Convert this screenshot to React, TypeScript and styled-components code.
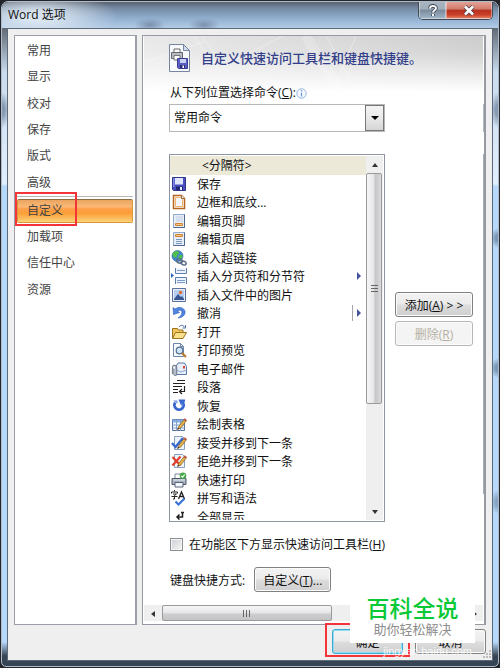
import React from "react";
import styled, { createGlobalStyle, css } from "styled-components";

const GlobalStyle = createGlobalStyle`
  *, *::before, *::after { box-sizing: border-box; }
  body {
    margin: 0;
    background: #23252b;
    color: #111;
    font: 12px/18px "Open Sans", "Noto Sans CJK SC", sans-serif;
  }
  button, select, input { font: inherit; color: inherit; margin: 0; }
  ul { list-style: none; margin: 0; padding: 0; }
`;

/* ---------- window frame ---------- */

const Page = styled.div`
  display: flex;
  min-height: 100vh;
  padding: 1px;
`;

const Window = styled.section`
  flex: 1;
  min-width: 0;
  display: flex;
  flex-direction: column;
  padding: 0 5px 5px;
  border: 1px solid #aebccb;
  border-radius: 7px 7px 5px 5px;
  background:
    radial-gradient(ellipse 8px 18px at 0 108px, #5f7690aa 30%, #5f769000),
    radial-gradient(ellipse 8px 18px at 100% 108px, #5f7690aa 30%, #5f769000),
    radial-gradient(ellipse 8px 10px at 100% 236px, #5f7690aa 30%, #5f769000),
    radial-gradient(ellipse 8px 10px at 100% 366px, #5f7690aa 30%, #5f769000),
    radial-gradient(ellipse 8px 12px at 100% 500px, #5f769088 30%, #5f769000),
    linear-gradient(#36454f00 0, #36454f00 calc(100% - 24px), #364453 calc(100% - 10px)),
    linear-gradient(#dfe9f500 0, #c9dbee 70px, #e2effc 182px, #b6d8fb 184px, #b6d8fb 100%);
`;

const TitleBar = styled.header`
  display: flex;
  justify-content: space-between;
  align-items: flex-start;
  height: 26px;
  margin: 0 -5px;
  padding-left: 6px;
  border-radius: 6px 6px 0 0;
  background:
    radial-gradient(ellipse 80px 24px at 36px 14px, #e6eef6d9 20%, #e6eef600 100%),
    radial-gradient(ellipse 16px 7px at 148px 23px, #53677e88, #53677e00),
    radial-gradient(ellipse 16px 7px at 202px 23px, #53677e88, #53677e00),
    linear-gradient(#596270 0, #7388a0 6px, #8ba7c6 14px, #a1bddd 21px, #b3cbe4 100%);
`;

const Title = styled.h1`
  margin: 4px 0 0;
  font-size: 12px;
  line-height: 18px;
  font-weight: 400;
`;

const Captions = styled.div`
  display: flex;
  height: 18px;
  margin-right: 5px;
  border: 1px solid #3e4a58;
  border-top: 0;
  border-radius: 0 0 5px 5px;
  overflow: hidden;
`;

const CaptionButton = styled.button<{ $close?: boolean }>`
  display: grid;
  place-items: center;
  width: ${(p) => (p.$close ? 46 : 27)}px;
  padding: 0;
  border: 1px solid #ffffff66;
  border-top: 0;
  background: ${(p) =>
    p.$close
      ? "linear-gradient(#e2a296 0, #d27a6c 45%, #b5301c 50%, #c9402a 80%, #e07a5c 100%)"
      : "linear-gradient(#a9b4c0 0, #a0adba 45%, #78899b 50%, #a0b3c6 100%)"};
`;

const Client = styled.div`
  flex: 1;
  display: flex;
  flex-direction: column;
  padding: 6px 6px 0;
  border: 1px solid #5d6a79;
  background: #efefef;
`;

const Columns = styled.div`
  flex: 1;
  display: grid;
  grid-template-columns: 123px minmax(0, 1fr);
  gap: 5px;
`;

/* ---------- category list ---------- */

const Sidebar = styled.nav`
  padding: 1px 2px;
  border: 1px solid #9a9fa8;
  border-right-width: 2px;
  background: #fff;
`;

const NavGroup = styled.ul<{ $height: number }>`
  display: grid;
  grid-auto-rows: 1fr;
  height: ${(p) => p.$height}px;
`;

const NavButton = styled.button`
  display: block;
  width: 100%;
  height: 100%;
  padding: 2px 10px 0;
  border: 0;
  background: none;
  color: #444;
  text-align: left;
`;

const Selected = styled.div`
  position: relative;
  height: 27px;
  margin-top: 1px;
  padding-top: 2px;
  border-top: 1px solid #b9b9b9;
`;

const SelectedButton = styled(NavButton)`
  height: 24px;
  border: 1px solid #d79a3c;
  border-top-color: #8e6c3d;
  border-radius: 2px;
  padding: 0 9px;
  background: linear-gradient(#e9a560 0, #fbb876 30%, #fda04a 40%, #fb9e37 60%, #ffd27a 100%);
`;

const RedFrame = styled.span<{ $box: string }>`
  position: absolute;
  inset: ${(p) => p.$box};
  border: 2px solid #f53439;
  pointer-events: none;
`;

/* ---------- main pane ---------- */

const Pane = styled.main`
  display: flex;
  flex-direction: column;
  min-width: 0;
  overflow: hidden;
  padding: 0 1px 1px;
  border: 1px solid #9599a2;
  border-right-width: 2px;
  background: #fff;
`;

const Banner = styled.div`
  position: relative;
  height: 68px;
  padding-left: 24px;
`;

const BannerArt = styled.svg`
  position: absolute;
  inset: 0;
  width: 100%;
  height: 56px;
`;

const BannerTitle = styled.div`
  position: relative;
  display: flex;
  align-items: center;
  gap: 9px;
  height: 44px;
`;

const Heading = styled.h2`
  margin: 0;
  font-size: 13px;
  line-height: 18px;
  font-weight: 500;
  color: #323e8a;
  white-space: nowrap;
`;

const FieldLabel = styled.label`
  position: relative;
  display: flex;
  align-items: center;
  height: 26px;
  padding-left: 2px;
`;

const Commands = styled.div`
  display: grid;
  grid-template-columns: 216px 78px 200px;
  grid-template-rows: 28px 368px;
  column-gap: 10px;
  row-gap: 22px;
  padding-left: 25px;
`;

const SelectBox = styled.div`
  display: flex;
  position: relative;
  border: 1px solid #b5b7ba;
`;

const Select = styled.select`
  flex: 1;
  appearance: none;
  padding: 0 4px;
  border: 0;
  border-radius: 0;
  background: #fff;
`;

const DropMark = styled.span`
  display: grid;
  place-items: center;
  width: 19px;
  border: 1px solid #777;
  background: linear-gradient(#f4f4f4, #e9e9e9 50%, #d5d5d5);
  pointer-events: none;
`;

const ListFrame = styled.div`
  display: grid;
  grid-template-columns: minmax(0, 1fr) 17px;
  border: 1px solid #9095a3;
  padding: 1px 1px 1px 0;
  overflow: hidden;
`;

const ListView = styled.div`
  overflow: hidden;
`;

const List = styled.ul`
  display: grid;
  grid-auto-rows: 1fr;
  height: 370px;
`;

const Row = styled.li<{ $head?: boolean }>`
  display: flex;
  align-items: center;
  gap: 10px;
  padding: 0 5px 0 1px;
  white-space: nowrap;
  ${(p) =>
    p.$head &&
    css`
      padding-left: 32px;
      background: #ece9d8;
    `}
`;

const RowText = styled.span`
  flex: 1;
  padding-top: 2px;
  line-height: 16px;
`;

const Flyout = styled.span<{ $split?: boolean }>`
  display: flex;
  align-items: center;
  height: 16px;
  padding-left: 4px;
  border-left: 1px solid ${(p) => (p.$split ? "#a5a5a5" : "transparent")};
`;

const ScrollV = styled.div`
  display: flex;
  flex-direction: column;
  background: #efefef;
`;

const ArrowBox = styled.span`
  display: grid;
  place-items: center;
  flex: none;
  width: 17px;
  height: 17px;
`;

const ScrollEnd = styled(ArrowBox)`
  margin-top: auto;
`;

const ThumbV = styled.div`
  display: grid;
  place-items: center;
  height: 231px;
  margin: 0 1px 0 0;
  border: 1px solid #9a9a9c;
  border-radius: 2px;
  background: linear-gradient(90deg, #f5f5f5, #e8e8ea 45%, #c6c6c9 60%, #dadadb);
`;

const Actions = styled.div`
  display: flex;
  flex-direction: column;
  gap: 4px;
  padding-top: 138px;
`;

const PushButton = styled.button<{ $default?: boolean }>`
  height: 25px;
  padding: 2px 8px 0;
  border: 1px solid ${(p) => (p.$default ? "#3ba9d0" : "#808080")};
  border-radius: 3px;
  box-shadow: inset 0 0 0 1px ${(p) => (p.$default ? "#8fdcf5" : "#fbfbfb")};
  background: linear-gradient(#f3f3f3 0, #ebebeb 48%, #dddddd 52%, #cfcfcf 100%);
  white-space: nowrap;
  &:disabled {
    border-color: #b4b8bd;
    background: #f4f4f4;
    color: #b5b1a2;
  }
`;

const NextColumn = styled.div`
  display: flex;
  flex-direction: column;
  gap: 5px;
`;

const NextList = styled.div`
  flex: 1;
  border: 1px solid #a9abb4;
`;

const NextButton = styled.div`
  height: 23px;
  margin-left: 1px;
  border: 1px solid #9a9a9c;
  border-radius: 2px;
`;

const NextSelect = styled.div`
  border: 1px solid #b5b7ba;
`;

const CheckLine = styled.label`
  display: flex;
  align-items: center;
  gap: 6px;
  height: 22px;
  margin-top: 11px;
  padding-left: 26px;
  white-space: nowrap;
`;

const CheckBox = styled.input`
  appearance: none;
  width: 13px;
  height: 13px;
  border: 1px solid #8e8f8f;
  box-shadow: inset 0 0 0 1px #f4f4f4;
  background: linear-gradient(135deg, #cbcfd5, #f6f6f6);
`;

const LineText = styled.span`
  padding-top: 2px;
`;

const ShortcutLine = styled.div`
  display: flex;
  align-items: center;
  gap: 9px;
  margin: 12px 0 13px;
  padding-left: 26px;
`;

const ShortcutButton = styled(PushButton)`
  width: 77px;
`;

const ScrollH = styled.div`
  display: flex;
  height: 16px;
  background: #efefef;
`;

const ThumbH = styled.div`
  display: grid;
  place-items: center;
  width: 170px;
  margin: 0 auto 0 1px;
  border: 1px solid #9a9a9c;
  border-radius: 2px;
  background: linear-gradient(#f5f5f5, #e8e8ea 45%, #cdcdd0 60%, #c4c4c6);
`;

/* ---------- footer ---------- */

const Footer = styled.footer`
  position: relative;
  display: flex;
  justify-content: flex-end;
  align-items: flex-start;
  gap: 12px;
  height: 35px;
  padding-top: 4px;
`;

const Slot = styled.div`
  position: relative;
  display: grid;
  width: 71px;
`;

const Card = styled.div`
  position: absolute;
  right: 11px;
  bottom: 17px;
  width: 125px;
  height: 53px;
  padding-top: 4px;
  background: #fff;
  text-align: center;
`;

const Brand = styled.div`
  font: 500 23px/26px "Noto Sans CJK SC", sans-serif;
  color: #0ac936;
`;

const Slogan = styled.div`
  font-size: 13px;
  line-height: 18px;
  color: #8d8d8d;
`;

const SiteMark = styled.span`
  position: absolute;
  right: 14px;
  bottom: 2px;
  font: 11px/14px "Liberation Sans", sans-serif;
  color: #fffc;
`;

const Grip = styled.svg`
  position: absolute;
  right: -6px;
  bottom: 1px;
`;

/* ---------- drawings ---------- */

const Arrow = ({ d, color = "#333" }: { d: string; color?: string }) => (
  <svg width="8" height="8" viewBox="0 0 8 8" aria-hidden="true">
    <path d={d} fill={color} />
  </svg>
);

const Pencil = () => (
  <g>
    <path d="M6.5 13.5 8 10l5.5-7 2 1.600L10 11.800z" fill="#e8b44a" stroke="#7c5a25" strokeWidth=".7" />
    <path d="m12.500 4.200 1.400-1.900 2 1.600-1.400 1.900z" fill="#c05a4a" />
    <path d="m6.500 13.500.6-1.600 1.100.9z" fill="#222" />
  </g>
);

const PageShape = ({ bars }: { bars?: React.ReactNode }) => (
  <g>
    <path d="M2.500 1.500h11v13h-11z" fill="#e6eefa" stroke="#93a9c8" />
    <path d="M13.500 1.500v13h-11" fill="none" stroke="#4f678e" />
    {bars}
  </g>
);

const icons: Record<string, React.ReactNode> = {
  save: (
    <g>
      <path d="M1.500 1.500h13v13h-12l-1-1z" fill="#4a4fc0" stroke="#30368c" />
      <path d="M4 2h8v6.500H4z" fill="#dfe6fb" />
      <path d="M5 10.500h7V14H5z" fill="#23296e" />
      <path d="M9 11h2v3H9z" fill="#e8ecff" />
      <path d="M2 2h1.500v9H2z" fill="#8288e6" />
    </g>
  ),
  border: (
    <g>
      <path d="M2.500 1.500h8l3 3v10h-11z" fill="#fff" stroke="#b5651f" strokeWidth="1.500" />
      <path d="M4.500 3.500h5l2 2v7h-7z" fill="#f3f7fd" stroke="#f2b06a" />
      <path d="M10.500 1.500v3h3" fill="#fff" stroke="#8a6a4a" />
    </g>
  ),
  footer: (
    <PageShape
      bars={
        <g>
          <path d="M5 4h7M5 6h7M5 8h7" stroke="#c3cfe0" />
          <path d="M4.500 10.500h7v2h-7z" fill="#f7c88a" stroke="#d0822c" />
        </g>
      }
    />
  ),
  header: (
    <PageShape
      bars={
        <g>
          <path d="M4.500 3.500h7v2h-7z" fill="#f7c88a" stroke="#d0822c" />
          <path d="M5 8.500h6M5 10.500h6M5 12.500h6" stroke="#7f98bd" />
        </g>
      }
    />
  ),
  link: (
    <g>
      <circle cx="6.500" cy="6" r="5.500" fill="#3f86cf" stroke="#2f5e93" strokeWidth=".6" />
      <path d="M3 2c3-2 5-1 5 1S6 4 6 6 3 8 2 6s0-3 1-4zM8 6c2-2 3-1 3.500 0S9 11 8 10 7 7 8 6z" fill="#4fbf4a" />
      <g fill="none" stroke="#5c6f8a" strokeWidth="1.600">
        <ellipse cx="8.500" cy="11" rx="3" ry="2" transform="rotate(20 8.500 11)" />
        <ellipse cx="12.500" cy="13" rx="2.700" ry="1.800" transform="rotate(20 12.500 13)" />
      </g>
    </g>
  ),
  pageBreak: (
    <g>
      <path d="M4.500 0v5.500h11V0M4.500 16v-6.500h11V16" fill="#eef4fd" stroke="#5d7fae" />
      <path d="M6 2.500h8M6 12.500h8M6 14.500h8" stroke="#7e9bc6" />
      <path d="M0 5v5l3-2.500z" fill="#2b62c4" />
    </g>
  ),
  picture: (
    <g>
      <path d="M1.500 1.500h13v13h-13z" fill="#e9f0fa" stroke="#5a6f9a" />
      <path d="M3 3h10v10H3z" fill="#b5cff0" />
      <path d="M3 12l4-5 3 3 1-1 2 3v1H3z" fill="#3b5694" />
      <circle cx="9.500" cy="5.500" r="1.800" fill="#e0703a" />
    </g>
  ),
  undo: <path d="M2 2.500 2.500 9.500 8.500 7.500 6.500 6C8.500 4.200 11.500 5.300 10.800 8.300c-.5 2-2 3.700-3.800 4.700C11.500 12.500 14.500 10 14 6.500 13.300 2.500 7.500 1 4 4z" fill="#4f84e0" stroke="#2f5db4" strokeWidth=".6" />,
  open: (
    <g>
      <path d="M1.500 4.500h5l1 1.500H12v8H1.500z" fill="#f0c65a" stroke="#9b7222" />
      <path d="M4.500 8.500H15.500L12 14.500H1.500z" fill="#fbe08c" stroke="#9b7222" />
      <path d="M8 3c2-2.500 4-2 5.500 0M14.500 1v3h-3" fill="none" stroke="#4c6ea6" />
    </g>
  ),
  preview: (
    <g>
      <path d="M2.500 1.500h7l3 3v10h-10z" fill="#f6f9fe" stroke="#6f86a8" />
      <path d="M9.500 1.500v3h3" fill="none" stroke="#6f86a8" />
      <circle cx="8.500" cy="8.500" r="3.300" fill="#cfe3f8" stroke="#56708f" strokeWidth="1.200" />
      <path d="m11 11 4 4" stroke="#b9782c" strokeWidth="2.200" />
    </g>
  ),
  mail: (
    <g>
      <path d="M5 5.500 7 2h6.500l2 3.500v8H5z" fill="#e6effb" stroke="#5876a5" />
      <path d="m5 9 5 2 5.500-2" fill="none" stroke="#8fa8cc" />
      <path d="M12 5h2v2.500h-2z" fill="#e0452c" />
      <path d="M1.500 13V6.500a2 2 0 0 1 4.200 0V13a1.400 1.400 0 0 1-2.800 0V7.500" fill="none" stroke="#7a8494" strokeWidth="1.200" />
    </g>
  ),
  paragraph: (
    <path d="M6 1.500h8M2 4.500h12M2 7.500h9M2 10.500h5M2 13.500h5M13.500 7v5.500H9M11 10l-2.500 2.500L11 15" fill="none" stroke="#222" strokeWidth="1.200" />
  ),
  redo: (
    <g>
      <path d="M4.200 4.500A4.600 4.600 0 1 0 11.500 4" fill="none" stroke="#3766cf" strokeWidth="2.800" />
      <path d="M7.500 1.500H14v2.300l-3 .2-.5 4.500z" fill="#3766cf" />
      <path d="M2 2.500h4.500v3z" fill="#6f95e6" />
    </g>
  ),
  table: (
    <g>
      <path d="M1.500 3.500h12v11h-12z" fill="#f0f6ff" stroke="#54709c" />
      <path d="M1.500 3.500h12v3h-12z" fill="#86aee2" />
      <path d="M1.500 9h12M1.500 12h12M5.500 4v11M9.500 4v11" stroke="#84a1cb" />
      <Pencil />
    </g>
  ),
  accept: (
    <g>
      <path d="M3.500 1.500h8l2 2v11h-10z" fill="#eef4fc" stroke="#8aa0bf" />
      <path d="m1 8 3.500 4L12 3" fill="none" stroke="#3569cc" strokeWidth="2.400" />
      <Pencil />
    </g>
  ),
  reject: (
    <g>
      <path d="M3.500 1.500h8l2 2v11h-10z" fill="#eef4fc" stroke="#8aa0bf" />
      <path d="m1.500 4 8 8.500M9.500 3.500l-8 9" stroke="#e2402b" strokeWidth="2.200" />
      <Pencil />
    </g>
  ),
  print: (
    <g>
      <path d="M4 2h7v5H4z" fill="#fff" stroke="#7888a0" />
      <path d="M1 6.500h14v6H1z" fill="#a9b2c0" stroke="#4f5968" />
      <path d="M2 8h12" stroke="#e3e8ef" />
      <path d="M4 10.500h8v4.500H4z" fill="#f4f8ff" stroke="#56647a" />
      <circle cx="12" cy="3.800" r="3.300" fill="#48a84a" />
      <path d="m10.300 3.800 1.300 1.400 2.200-2.700" fill="none" stroke="#fff" strokeWidth="1.100" />
    </g>
  ),
  spell: (
    <g fill="none" stroke="#222" strokeWidth="1">
      <path d="M3.500 0v1.500M.5 3.500V2h6v1.500M2 4h3.500L3.500 5.500V9H2M.5 6.500h6" />
      <path d="m7.500 9 3-7 3 7M8.500 6.500h4" strokeWidth="1.300" />
      <path d="m4.500 11.500 3 3 6-6" stroke="#3b72d8" strokeWidth="2.200" />
    </g>
  ),
  showAll: <path d="M11.500 3v5H6M8.500 5.500 6 8l2.500 2.500M10 3.500h3" fill="none" stroke="#222" strokeWidth="1.500" />,
};

const Icon = ({ name }: { name: string }) => (
  <svg width="16" height="16" viewBox="0 0 16 16" aria-hidden="true">
    {icons[name]}
  </svg>
);

const HeaderIcon = () => (
  <svg width="24" height="30" viewBox="0 0 24 30" aria-hidden="true">
    <path d="M1.500 1.500h14l6 6v21h-20z" fill="#f7f9fd" stroke="#76859f" />
    <path d="M15.500 1.500v6h6z" fill="#cddbee" stroke="#76859f" />
    <path d="M6 9V6h6v3" fill="#fff" stroke="#666" />
    <path d="M3.500 9.500h11v6h-11z" fill="#b8bbc2" stroke="#65686f" />
    <path d="M6 12.500h6V17H6z" fill="#fff" stroke="#777" />
    <path d="M9.500 15.500h10v10h-9l-1-1z" fill="#5a5ec4" stroke="#3a3f94" />
    <path d="M12 16h6v4h-6z" fill="#c9d0f2" />
    <path d="M12 22h5v3h-5z" fill="#2b2f78" />
    <path d="M14.500 22.500h1.500V25h-1.500z" fill="#fff" />
  </svg>
);

const InfoIcon = () => (
  <svg width="11" height="11" viewBox="0 0 11 11" aria-hidden="true">
    <circle cx="5.500" cy="5.500" r="4.700" fill="#f5f9ff" stroke="#8fb3e0" />
    <path d="M5.500 2.300v1.400M5.500 4.700v3.800" stroke="#6a97d6" strokeWidth="1.200" />
  </svg>
);

/* ---------- data ---------- */

const topCategories = ["常用", "显示", "校对", "保存", "版式", "高级"];
const lowerCategories = ["加载项", "信任中心", "资源"];

const commands: { icon: string; text: string; flyout?: "menu" | "split" }[] = [
  { icon: "save", text: "保存" },
  { icon: "border", text: "边框和底纹..." },
  { icon: "footer", text: "编辑页脚" },
  { icon: "header", text: "编辑页眉" },
  { icon: "link", text: "插入超链接" },
  { icon: "pageBreak", text: "插入分页符和分节符", flyout: "menu" },
  { icon: "picture", text: "插入文件中的图片" },
  { icon: "undo", text: "撤消", flyout: "split" },
  { icon: "open", text: "打开" },
  { icon: "preview", text: "打印预览" },
  { icon: "mail", text: "电子邮件" },
  { icon: "paragraph", text: "段落" },
  { icon: "redo", text: "恢复" },
  { icon: "table", text: "绘制表格" },
  { icon: "accept", text: "接受并移到下一条" },
  { icon: "reject", text: "拒绝并移到下一条" },
  { icon: "print", text: "快速打印" },
  { icon: "spell", text: "拼写和语法" },
  { icon: "showAll", text: "全部显示" },
];

const NavItems = ({ names, height }: { names: string[]; height: number }) => (
  <NavGroup $height={height}>
    {names.map((name) => (
      <li key={name}>
        <NavButton type="button">{name}</NavButton>
      </li>
    ))}
  </NavGroup>
);

export default function App() {
  return (
    <>
      <GlobalStyle />
      <Page>
        <Window>
          <TitleBar>
            <Title>Word 选项</Title>
            <Captions>
              <CaptionButton type="button" aria-label="帮助">
                <svg width="12" height="13" viewBox="0 0 12 13" fill="none">
                  <path d="M3 4.500C3 1 9 1 9 4.300 9 6.300 6 6.300 6 8.500M6 10v2" stroke="#3c4856" strokeWidth="3.600" />
                  <path d="M3 4.500C3 1 9 1 9 4.300 9 6.300 6 6.300 6 8.500M6 10v2" stroke="#fff" strokeWidth="1.900" />
                </svg>
              </CaptionButton>
              <CaptionButton type="button" $close aria-label="关闭">
                <svg width="12" height="11" viewBox="0 0 12 11" fill="none">
                  <path d="m2 1.500 8 8M10 1.500l-8 8" stroke="#54434a" strokeWidth="4.400" />
                  <path d="m2 1.500 8 8M10 1.500l-8 8" stroke="#fff" strokeWidth="2.600" />
                </svg>
              </CaptionButton>
            </Captions>
          </TitleBar>

          <Client>
            <Columns>
              <Sidebar aria-label="选项类别">
                <NavItems names={topCategories} height={158} />
                <Selected>
                  <SelectedButton type="button" aria-current="page">
                    自定义
                  </SelectedButton>
                  <RedFrame $box="-5px 56px -3px -2px" />
                </Selected>
                <NavItems names={lowerCategories} height={79} />
              </Sidebar>

              <Pane>
                <Banner>
                  <BannerArt viewBox="0 0 342 56" preserveAspectRatio="none" aria-hidden="true">
                    <defs>
                      <linearGradient id="side" x1="0" x2="1" y1="0" y2="0">
                        <stop offset="0" stopColor="#e9e9e9" />
                        <stop offset="1" stopColor="#cccccc" />
                      </linearGradient>
                      <linearGradient id="fade" x1="0" x2="0" y1="0" y2="1">
                        <stop offset="0" stopColor="#fff" stopOpacity="0" />
                        <stop offset=".3" stopColor="#fff" stopOpacity=".15" />
                        <stop offset="1" stopColor="#fff" />
                      </linearGradient>
                    </defs>
                    <path d="M0 0h342v56H0z" fill="url(#side)" />
                    <g stroke="#fff" strokeOpacity=".35">
                      <path d="m50 0 30 40M58 0l34 45M0 26 60 6M80 30l60-30M168 0l36 56M184 0l30 56M214 0l-24 56" />
                      <path d="m162 0 34 56" strokeWidth="8" strokeOpacity=".2" />
                    </g>
                    <path d="M0 0h342v56H0z" fill="url(#fade)" />
                  </BannerArt>
                  <BannerTitle>
                    <HeaderIcon />
                    <Heading>自定义快速访问工具栏和键盘快捷键。</Heading>
                  </BannerTitle>
                  <FieldLabel htmlFor="source">
                    从下列位置选择命令(<u>C</u>):
                    <InfoIcon />
                  </FieldLabel>
                </Banner>

                <Commands>
                  <SelectBox>
                    <Select id="source" defaultValue="常用命令">
                      <option>常用命令</option>
                    </Select>
                    <DropMark>
                      <Arrow d="M0 2h8L4 6z" color="#000" />
                    </DropMark>
                  </SelectBox>
                  <span />
                  <NextSelect />

                  <ListFrame>
                    <ListView>
                      <List role="listbox" aria-label="命令">
                        <Row $head role="option" aria-selected="true">
                          <RowText>&lt;分隔符&gt;</RowText>
                        </Row>
                        {commands.map((c) => (
                          <Row key={c.text} role="option" aria-selected="false">
                            <Icon name={c.icon} />
                            <RowText>{c.text}</RowText>
                            {c.flyout && (
                              <Flyout $split={c.flyout === "split"}>
                                <svg width="4" height="8" viewBox="0 0 4 8" aria-hidden="true">
                                  <path d="M0 0v8l4-4z" fill="#44559c" />
                                </svg>
                              </Flyout>
                            )}
                          </Row>
                        ))}
                      </List>
                    </ListView>
                    <ScrollV>
                      <ArrowBox>
                        <Arrow d="M1 6h6L4 2z" />
                      </ArrowBox>
                      <ThumbV>
                        <svg width="7" height="8" viewBox="0 0 7 8" aria-hidden="true">
                          <path d="M0 .5h7M0 3.500h7M0 6.500h7" stroke="#666" />
                        </svg>
                      </ThumbV>
                      <ScrollEnd>
                        <Arrow d="M1 2h6L4 6z" />
                      </ScrollEnd>
                    </ScrollV>
                  </ListFrame>
                  <Actions>
                    <PushButton type="button">
                      添加(<u>A</u>) &gt;&nbsp;&gt;
                    </PushButton>
                    <PushButton type="button" disabled>
                      删除(<u>R</u>)
                    </PushButton>
                  </Actions>
                  <NextColumn>
                    <NextList />
                    <NextButton />
                  </NextColumn>
                </Commands>

                <CheckLine>
                  <CheckBox type="checkbox" />
                  <LineText>
                    在功能区下方显示快速访问工具栏(<u>H</u>)
                  </LineText>
                </CheckLine>

                <ShortcutLine>
                  <LineText>键盘快捷方式:</LineText>
                  <ShortcutButton type="button">
                    自定义(<u>T</u>)...
                  </ShortcutButton>
                </ShortcutLine>

                <ScrollH>
                  <ArrowBox>
                    <Arrow d="M6 1v6L2 4z" />
                  </ArrowBox>
                  <ThumbH>
                    <svg width="8" height="7" viewBox="0 0 8 7" aria-hidden="true">
                      <path d="M.5 0v7M3.500 0v7M6.500 0v7" stroke="#666" />
                    </svg>
                  </ThumbH>
                  <ArrowBox>
                    <Arrow d="M2 1v6l4-3z" />
                  </ArrowBox>
                </ScrollH>
              </Pane>
            </Columns>

            <Footer>
              <Slot>
                <PushButton type="button" $default>
                  确定
                </PushButton>
                <RedFrame $box="-6px -7px -3px -7px" />
              </Slot>
              <Slot>
                <PushButton type="button">取消</PushButton>
              </Slot>
              <Card>
                <Brand>百科全说</Brand>
                <Slogan>助你轻松解决</Slogan>
              </Card>
              <SiteMark>jingyan.baidu.com</SiteMark>
              <Grip width="9" height="9" viewBox="0 0 9 9" aria-hidden="true">
                <path d="M6 0h2v2H6zM3 3h2v2H3zM6 3h2v2H6zM0 6h2v2H0zM3 6h2v2H3zM6 6h2v2H6z" fill="#bbb" />
              </Grip>
            </Footer>
          </Client>
        </Window>
      </Page>
    </>
  );
}
